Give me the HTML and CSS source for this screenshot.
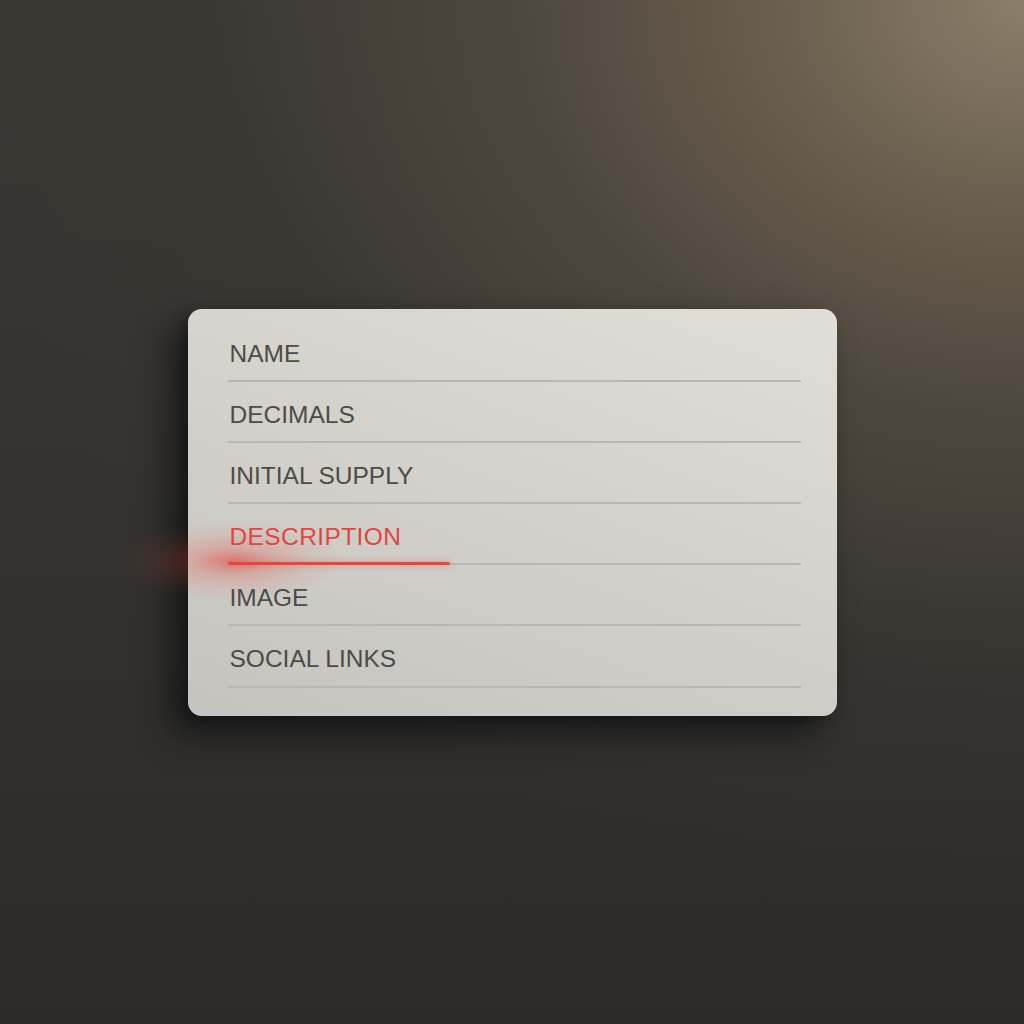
FILE: index.html
```html
<!DOCTYPE html>
<html lang="en">
<head>
<meta charset="utf-8">
<title>Token fields</title>
<link rel="stylesheet" href="styles.css">
</head>
<body>
<main class="stage">
  <section class="card">
    <span class="glow"></span>
    <div class="row"><span class="label">NAME</span></div>
    <div class="row"><span class="label">DECIMALS</span></div>
    <div class="row"><span class="label">INITIAL SUPPLY</span></div>
    <div class="row active"><span class="label">DESCRIPTION</span></div>
    <div class="row"><span class="label">IMAGE</span></div>
    <div class="row"><span class="label">SOCIAL LINKS</span></div>
  </section>
</main>
</body>
</html>
```
FILE: styles.css
```css
html, body {
  margin: 0;
  padding: 0;
}
body {
  width: 1024px;
  height: 1024px;
  overflow: hidden;
  font-family: "Liberation Sans", Arial, sans-serif;
  background:
    radial-gradient(ellipse 1200px 1000px at 100% 0%, rgba(140,126,104,1) 0%, rgba(112,100,82,0.9) 20%, rgba(86,78,66,0.7) 42%, rgba(62,58,52,0.3) 68%, rgba(50,48,45,0) 90%),
    linear-gradient(180deg, #3a3733 0%, #34322f 50%, #2c2b29 100%);
}
.stage {
  height: 1024px;
  display: flex;
  align-items: center;
  justify-content: center;
}
.card {
  position: relative;
  width: 649px;
  height: 407px;
  box-sizing: border-box;
  padding: 12px 36px 28px 40px;
  border-radius: 14px;
  background: linear-gradient(200deg, #e0ded6 0%, #d4d2cb 45%, #c5c3be 100%);
  box-shadow:
    -18px 18px 34px rgba(12,14,16,0.65),
    -6px 6px 12px rgba(12,14,16,0.35),
    0 0 0 1px rgba(255,255,255,0.08) inset;
}
.glow {
  position: absolute;
  left: -70px;
  top: 212px;
  width: 300px;
  height: 80px;
  background: radial-gradient(closest-side at 38% 50%, rgba(235,45,35,0.5) 0%, rgba(235,60,50,0.22) 35%, rgba(235,60,50,0.07) 70%, rgba(235,60,50,0) 100%);
  pointer-events: none;
  z-index: 0;
}
.row {
  position: relative;
  z-index: 1;
  height: 61.2px;
  box-sizing: border-box;
  padding-top: 21px;
  border-bottom: 2px solid #b9b7b1;
}
.label {
  display: block;
  padding-left: 2px;
  font-size: 24.5px;
  line-height: 24px;
  color: #4d4b48;
}
.row.active .label {
  color: #e0463f;
  letter-spacing: 0.4px;
}
.row.active::after {
  content: "";
  position: absolute;
  left: 0;
  bottom: -2px;
  width: 222px;
  height: 3px;
  border-radius: 2px;
  background: #e8453d;
  box-shadow: 0 0 6px rgba(232,69,61,0.5);
}
```
